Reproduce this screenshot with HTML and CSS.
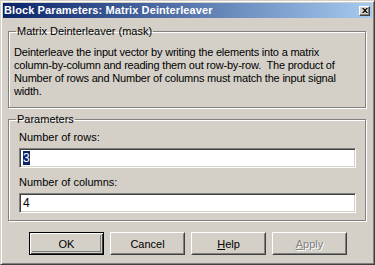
FILE: index.html
```html
<!DOCTYPE html>
<html>
<head>
<meta charset="utf-8">
<link rel="stylesheet" href="styles.css">
</head>
<body>
<div class="window">
  <div class="titlebar">
    <span class="title">Block Parameters: Matrix Deinterleaver</span>
    <span class="close"><svg width="6" height="5" viewBox="0 0 6 5"><path d="M0 0h1.5L3 1.5 4.5 0H6L3.8 2.5 6 5H4.5L3 3.5 1.5 5H0L2.2 2.5z" fill="#000"/></svg></span>
  </div>
  <div class="content">
    <fieldset class="group desc">
      <legend>Matrix Deinterleaver (mask)</legend>
      <p>Deinterleave the input vector by writing the elements into a matrix<br>column-by-column and reading them out row-by-row.&nbsp; The product of<br>Number of rows and Number of columns must match the input signal<br>width.</p>
    </fieldset>
    <fieldset class="group params">
      <legend>Parameters</legend>
      <div class="params-body">
        <div class="label first">Number of rows:</div>
        <div class="field"><span class="sel">3</span></div>
        <div class="label">Number of columns:</div>
        <div class="field">4</div>
      </div>
    </fieldset>
    <div class="buttons">
      <div class="btn default"><div class="btn-inner">OK</div></div>
      <div class="btn"><div class="btn-inner">Cancel</div></div>
      <div class="btn"><div class="btn-inner"><u>H</u>elp</div></div>
      <div class="btn disabled"><div class="btn-inner"><u>A</u>pply</div></div>
    </div>
  </div>
</div>
</body>
</html>
```
FILE: styles.css
```css
html, body {
  margin: 0;
  padding: 0;
  background: #d4d0c8;
}
body {
  font-family: "Liberation Sans", Arial, sans-serif;
  font-size: 11px;
  color: #000;
}
.window {
  width: 375px;
  height: 265px;
  box-sizing: border-box;
  border: 1px solid;
  border-color: #d4d0c8 #404040 #404040 #d4d0c8;
  box-shadow: inset 1px 1px #fff, inset -1px -1px #808080;
  padding: 2px;
  background: #d4d0c8;
  display: flex;
  flex-direction: column;
}
.titlebar {
  height: 15px;
  flex: none;
  display: flex;
  align-items: center;
  background: linear-gradient(to right, #0a246a, #a6caf0);
}
.title {
  flex: 1;
  color: #fff;
  font-weight: bold;
  font-size: 11px;
  padding-left: 1px;
  line-height: 15px;
  white-space: nowrap;
  letter-spacing: 0.1px;
}
.close {
  width: 11px;
  height: 10px;
  box-sizing: border-box;
  background: #d4d0c8;
  border: 1px solid;
  border-color: #fff #404040 #404040 #fff;
  box-shadow: inset -1px -1px #808080;
  display: flex;
  align-items: center;
  justify-content: center;
  margin-right: 2px;
}
.close svg {
  display: block;
}
.content {
  flex: 1;
  display: flex;
  flex-direction: column;
  padding: 0 6px 0 5px;
}
.group {
  margin: 0;
  border: 1px solid #808080;
  box-shadow: inset 1px 1px #fff, 1px 1px #fff;
  padding: 0;
  min-width: 0;
  box-sizing: border-box;
}
.group legend {
  padding: 0 1px;
  margin-left: 7px;
  line-height: 13px;
}
.desc {
  margin-top: 7px;
  height: 83px;
}
.desc p {
  margin: 8px 0 0 5px;
  line-height: 13px;
  white-space: nowrap;
  letter-spacing: -0.2px;
}
.params {
  margin-top: 5px;
  height: 108px;
}
.params-body {
  padding: 0 9px 0 10px;
}
.label {
  line-height: 13px;
  margin-top: 8px;
}
.label.first {
  margin-top: 5px;
}
.field {
  height: 20px;
  box-sizing: border-box;
  margin-top: 4px;
  background: #fff;
  border: 1px solid;
  border-color: #808080 #fff #fff #808080;
  box-shadow: inset 1px 1px #404040, inset -1px -1px #d4d0c8;
  padding: 2px 0 0 3px;
  line-height: 14px;
  font-size: 12px;
}
.sel {
  background: #0a246a;
  color: #fff;
}
.buttons {
  display: flex;
  gap: 6px;
  margin-top: 11px;
  padding-left: 21px;
}
.btn {
  width: 75px;
  height: 23px;
  box-sizing: border-box;
  border: 1px solid;
  border-color: #fff #404040 #404040 #fff;
  background: #d4d0c8;
}
.btn-inner {
  height: 100%;
  box-sizing: border-box;
  border: 1px solid;
  border-color: #d4d0c8 #808080 #808080 #d4d0c8;
  display: flex;
  align-items: center;
  justify-content: center;
  font-size: 11px;
}
.btn.default {
  border-color: #000;
  box-shadow: inset 1px 1px #fff, inset -1px -1px #404040;
}
.btn.default .btn-inner {
  border-color: transparent;
  margin: 1px;
  height: calc(100% - 2px);
  box-shadow: inset -1px -1px #808080;
}
.btn.disabled .btn-inner {
  color: #808080;
  text-shadow: 1px 1px #fff;
}
u {
  text-decoration: underline;
}
```
